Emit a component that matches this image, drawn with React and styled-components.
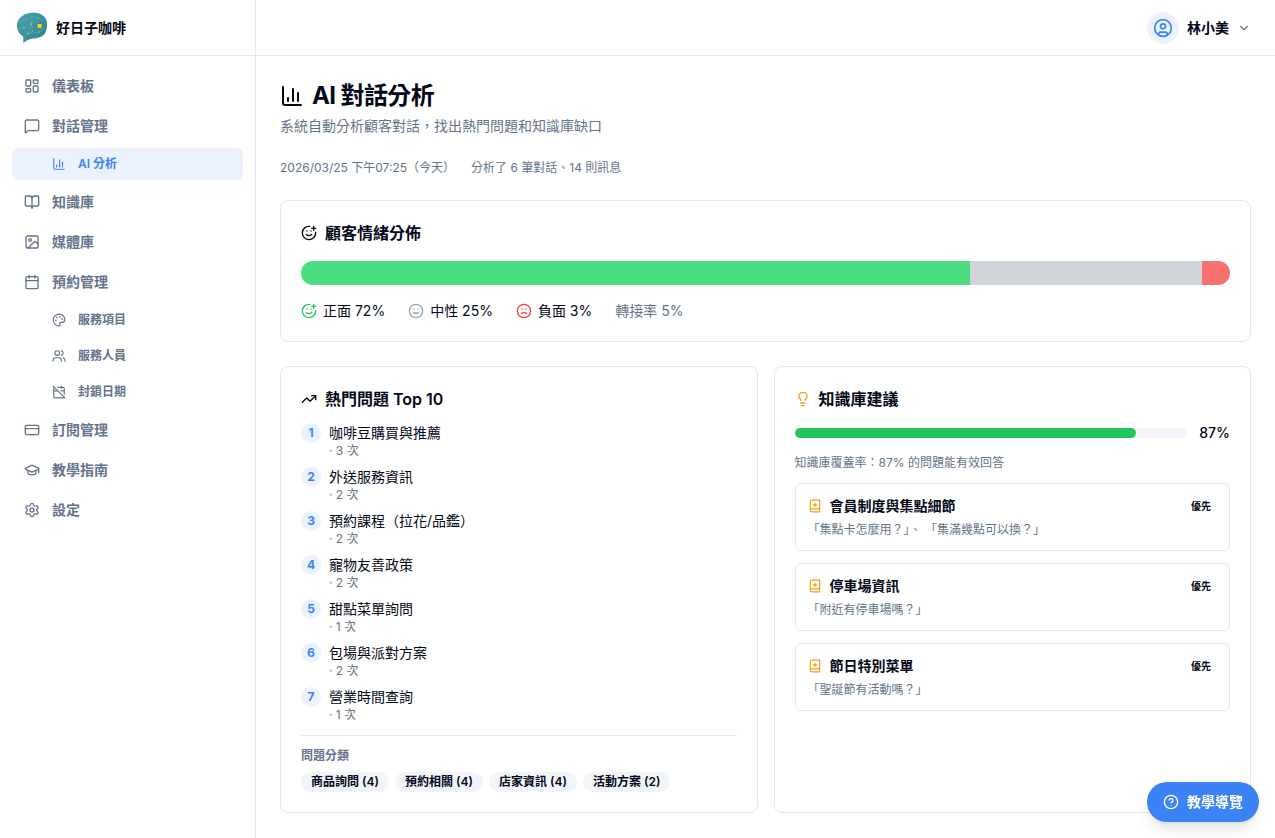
import React from 'react'
import styled, {createGlobalStyle} from 'styled-components'
import {
  BookOpen,
  BookPlus,
  Calendar,
  CalendarOff,
  ChartColumn,
  ChevronDown,
  CircleQuestionMark,
  CircleUser,
  CreditCard,
  Frown,
  GraduationCap,
  Image,
  LayoutDashboard,
  Lightbulb,
  Meh,
  MessageSquare,
  Palette,
  Settings,
  SmilePlus,
  TrendingUp,
  Users,
} from 'lucide-react'

const colors = {
  text: '#020817',
  muted: '#64748b',
  border: '#e2e8f0',
  soft: '#f1f5f9',
  primary: '#3b82f6',
  primarySoft: '#ebf2fe',
  green: '#22c55e',
  amber: '#f59e0b',
}

const NAV = [
  {label: '儀表板', icon: LayoutDashboard},
  {label: '對話管理', icon: MessageSquare},
  {label: 'AI 分析', icon: ChartColumn, sub: true, active: true},
  {label: '知識庫', icon: BookOpen},
  {label: '媒體庫', icon: Image},
  {label: '預約管理', icon: Calendar},
  {label: '服務項目', icon: Palette, sub: true},
  {label: '服務人員', icon: Users, sub: true},
  {label: '封鎖日期', icon: CalendarOff, sub: true},
  {label: '訂閱管理', icon: CreditCard},
  {label: '教學指南', icon: GraduationCap},
  {label: '設定', icon: Settings},
]

const SENTIMENT = [
  {label: '正面', value: 72, bar: '#4ade80', color: '#22c55e', icon: SmilePlus},
  {label: '中性', value: 25, bar: '#d1d5db', color: '#9ca3af', icon: Meh},
  {label: '負面', value: 3, bar: '#f87171', color: '#ef4444', icon: Frown},
]

const QUESTIONS = [
  {title: '咖啡豆購買與推薦', count: 3},
  {title: '外送服務資訊', count: 2},
  {title: '預約課程（拉花/品鑑）', count: 2},
  {title: '寵物友善政策', count: 2},
  {title: '甜點菜單詢問', count: 1},
  {title: '包場與派對方案', count: 2},
  {title: '營業時間查詢', count: 1},
]

const CATEGORIES = [
  {name: '商品詢問', count: 4},
  {name: '預約相關', count: 4},
  {name: '店家資訊', count: 4},
  {name: '活動方案', count: 2},
]

const SUGGESTIONS = [
  {title: '會員制度與集點細節', text: '「集點卡怎麼用？」、 「集滿幾點可以換？」'},
  {title: '停車場資訊', text: '「附近有停車場嗎？」'},
  {title: '節日特別菜單', text: '「聖誕節有活動嗎？」'},
]

const COVERAGE = 87

const Logo = () => (
  <svg width="32" height="32" viewBox="0 0 32 32" aria-hidden="true">
    <defs>
      <linearGradient id="bubble" x1="0" y1="0" x2="1" y2="1">
        <stop offset="0" stopColor="#45a5b0" />
        <stop offset="1" stopColor="#2f7f88" />
      </linearGradient>
    </defs>
    <path
      d="M16 .8C22 .6 27.500 2.500 30 7C31.800 11.500 31.400 18 28.500 22C26 25.200 21.500 26.200 16.500 26.600C12.500 27.300 10 29 7.400 31L7.200 24.600C3.500 22.600 1.200 19 1 14.200C.8 7.500 6 1.300 16 .8Z"
      fill="url(#bubble)"
    />
    <path
      d="M4 10L10 7L16 4L22 6L27 9M4 10L8 16L15 12L10 7M15 12L22 6M15 12L23 20L28 17M8 16L12 22L15 12L17 19L12 22L23 20M3 17L8 16M12 22L8 25M16 4L15 12M23 20L20 25"
      fill="none"
      stroke="#a9d2cf"
      strokeWidth=".4"
      opacity=".55"
    />
    <g fill="#c5e0d8" opacity=".8">
      <circle cx="10" cy="7" r=".6" />
      <circle cx="15" cy="12" r=".8" />
      <circle cx="8" cy="16" r=".6" />
      <circle cx="22" cy="6" r=".6" />
      <circle cx="12" cy="22" r=".6" />
      <circle cx="17" cy="19" r=".5" />
      <circle cx="23" cy="20" r=".6" />
    </g>
    <rect x="21.500" y="12" width="4" height="4" rx=".8" fill="#f5d90a" />
  </svg>
)

const App = () => (
  <>
    <GlobalStyle />
    <Page>
      <Sidebar>
        <Brand href="#">
          <Logo />
          好日子咖啡
        </Brand>
        <Nav>
          {NAV.map(({label, icon: Icon, sub, active}) => (
            <NavLink
              key={label}
              href="#"
              $sub={sub}
              $active={active}
              aria-current={active ? 'page' : undefined}
            >
              <Icon size={sub ? 14 : 16} />
              {label}
            </NavLink>
          ))}
        </Nav>
      </Sidebar>

      <Body>
        <TopBar>
          <UserButton type="button">
            <Avatar><CircleUser size={20} /></Avatar>
            林小美
            <Chevron size={14} />
          </UserButton>
        </TopBar>

        <Main>
          <header>
            <Title><ChartColumn size={24} />AI 對話分析</Title>
            <Subtitle>系統自動分析顧客對話，找出熱門問題和知識庫缺口</Subtitle>
          </header>

          <Meta>
            <span>2026/03/25 下午07:25（今天）</span>
            <span>分析了 6 筆對話、14 則訊息</span>
          </Meta>

          <Card>
            <CardTitle><SmilePlus size={16} />顧客情緒分佈</CardTitle>
            <StackedBar>
              {SENTIMENT.map(s => (
                <Segment key={s.label} $color={s.bar} style={{width: `${s.value}%`}} />
              ))}
            </StackedBar>
            <Legend>
              {SENTIMENT.map(({label, value, color, icon: Icon}) => (
                <LegendItem key={label}>
                  <Icon size={16} color={color} />
                  {label} {value}%
                </LegendItem>
              ))}
              <LegendItem $muted>轉接率 5%</LegendItem>
            </Legend>
          </Card>

          <Columns>
            <Card>
              <CardTitle><TrendingUp size={16} />熱門問題 Top 10</CardTitle>
              <Questions>
                {QUESTIONS.map((q, i) => (
                  <Question key={q.title}>
                    <Rank>{i + 1}</Rank>
                    <div>
                      <p>{q.title}</p>
                      <Small>· {q.count} 次</Small>
                    </div>
                  </Question>
                ))}
              </Questions>
              <Categories>
                <CategoriesTitle>問題分類</CategoriesTitle>
                <Chips>
                  {CATEGORIES.map(c => (
                    <Chip key={c.name}>{c.name} ({c.count})</Chip>
                  ))}
                </Chips>
              </Categories>
            </Card>

            <Card>
              <CardTitle $icon={colors.amber}><Lightbulb size={16} />知識庫建議</CardTitle>
              <Coverage>
                <Track>
                  <Fill style={{width: `${COVERAGE}%`}} />
                </Track>
                {COVERAGE}%
              </Coverage>
              <CoverageNote>知識庫覆蓋率：{COVERAGE}% 的問題能有效回答</CoverageNote>
              <Suggestions>
                {SUGGESTIONS.map(s => (
                  <Suggestion key={s.title}>
                    <SuggestionHead>
                      <BookPlus size={14} color={colors.amber} />
                      <SuggestionTitle>{s.title}</SuggestionTitle>
                      <Badge>優先</Badge>
                    </SuggestionHead>
                    <Small>{s.text}</Small>
                  </Suggestion>
                ))}
              </Suggestions>
            </Card>
          </Columns>
        </Main>
      </Body>

      <TourButton type="button">
        <CircleQuestionMark size={16} />
        教學導覽
      </TourButton>
    </Page>
  </>
)

const GlobalStyle = createGlobalStyle`
  *, *::before, *::after {
    box-sizing: border-box;
  }
  body {
    margin: 0;
    background: #fff;
    color: ${colors.text};
    font-family: Inter, "Noto Sans CJK TC", sans-serif;
    font-size: 14px;
    line-height: 20px;
  }
  h1, h2, h3, p, ol, ul {
    margin: 0;
    padding: 0;
  }
  ol, ul {
    list-style: none;
  }
  button {
    font: inherit;
    color: inherit;
    border: 0;
    background: none;
    cursor: pointer;
  }
  a {
    color: inherit;
    text-decoration: none;
  }
  svg {
    flex-shrink: 0;
  }
`
const Page = styled.div`
  display: flex;
  min-height: 100vh;
`
const Sidebar = styled.aside`
  width: 256px;
  flex-shrink: 0;
  border-right: 1px solid ${colors.border};
`
const Brand = styled.a`
  display: flex;
  align-items: center;
  gap: 8px;
  height: 56px;
  padding: 0 16px;
  border-bottom: 1px solid ${colors.border};
  font-weight: 600;
`
const Nav = styled.nav`
  display: flex;
  flex-direction: column;
  gap: 4px;
  padding: 12px;
`
const NavLink = styled.a`
  display: flex;
  align-items: center;
  gap: 12px;
  height: ${p => p.$sub ? 32 : 36}px;
  padding: 0 12px 0 ${p => p.$sub ? 40 : 12}px;
  border-radius: 6px;
  font-size: ${p => p.$sub ? 12 : 14}px;
  font-weight: 600;
  color: ${p => p.$active ? colors.primary : colors.muted};
  background: ${p => p.$active ? colors.primarySoft : 'transparent'};
`
const Body = styled.div`
  flex: 1;
  min-width: 0;
`
const TopBar = styled.header`
  display: flex;
  align-items: center;
  justify-content: flex-end;
  height: 56px;
  padding: 0 24px;
  border-bottom: 1px solid ${colors.border};
`
const UserButton = styled.button`
  display: flex;
  align-items: center;
  gap: 8px;
  padding: 0;
  font-weight: 600;
`
const Avatar = styled.span`
  display: flex;
  align-items: center;
  justify-content: center;
  width: 32px;
  height: 32px;
  border-radius: 50%;
  color: ${colors.primary};
  background: ${colors.primarySoft};
`
const Chevron = styled(ChevronDown)`
  color: ${colors.muted};
`
const Main = styled.main`
  display: flex;
  flex-direction: column;
  gap: 24px;
  padding: 24px;
`
const Title = styled.h1`
  display: flex;
  align-items: center;
  gap: 8px;
  font-size: 24px;
  line-height: 32px;
  font-weight: 700;
  letter-spacing: -0.025em;
`
const Subtitle = styled.p`
  margin-top: 4px;
  color: ${colors.muted};
`
const Meta = styled.div`
  display: flex;
  gap: 16px;
  font-size: 12px;
  line-height: 16px;
  color: ${colors.muted};
`
const Card = styled.section`
  padding: 20px;
  border: 1px solid ${colors.border};
  border-radius: 8px;
`
const CardTitle = styled.h2`
  display: flex;
  align-items: center;
  gap: 8px;
  font-size: 16px;
  line-height: 24px;
  font-weight: 600;
  svg {
    color: ${p => p.$icon || 'inherit'};
  }
`
const StackedBar = styled.div`
  display: flex;
  height: 24px;
  margin-top: 16px;
  border-radius: 12px;
  overflow: hidden;
`
const Segment = styled.div`
  background: ${p => p.$color};
`
const Legend = styled.div`
  display: flex;
  flex-wrap: wrap;
  gap: 23px;
  margin-top: 16px;
`
const LegendItem = styled.span`
  display: flex;
  align-items: center;
  gap: 6px;
  color: ${p => p.$muted ? colors.muted : colors.text};
`
const Columns = styled.div`
  display: grid;
  grid-template-columns: 1fr 1fr;
  gap: 16px;
`
const Questions = styled.ol`
  display: flex;
  flex-direction: column;
  gap: 8px;
  margin-top: 12px;
`
const Question = styled.li`
  display: flex;
  align-items: flex-start;
  gap: 8px;
`
const Rank = styled.span`
  width: 20px;
  height: 20px;
  border-radius: 50%;
  font-size: 12px;
  font-weight: 700;
  text-align: center;
  color: ${colors.primary};
  background: ${colors.primarySoft};
`
const Small = styled.p`
  font-size: 12px;
  line-height: 16px;
  color: ${colors.muted};
`
const Categories = styled.div`
  margin-top: 12px;
  padding-top: 12px;
  border-top: 1px solid ${colors.border};
`
const CategoriesTitle = styled.h3`
  font-size: 12px;
  line-height: 16px;
  font-weight: 600;
  color: ${colors.muted};
`
const Chips = styled.ul`
  display: flex;
  flex-wrap: wrap;
  gap: 6px;
  margin-top: 8px;
`
const Chip = styled.li`
  padding: 0 10px;
  border-radius: 10px;
  font-size: 12px;
  font-weight: 600;
  background: ${colors.soft};
`
const Coverage = styled.div`
  display: flex;
  align-items: center;
  gap: 12px;
  margin-top: 12px;
  font-weight: 500;
`
const Track = styled.div`
  flex: 1;
  height: 10px;
  border-radius: 5px;
  background: ${colors.soft};
`
const Fill = styled.div`
  height: 100%;
  border-radius: 5px;
  background: ${colors.green};
`
const CoverageNote = styled(Small)`
  margin: 12px 0;
`
const Suggestions = styled.ul`
  display: flex;
  flex-direction: column;
  gap: 12px;
`
const Suggestion = styled.li`
  padding: 12px;
  border: 1px solid ${colors.border};
  border-radius: 6px;
`
const SuggestionHead = styled.div`
  display: flex;
  align-items: center;
  gap: 8px;
  margin-bottom: 6px;
`
const SuggestionTitle = styled.h3`
  flex: 1;
  font-size: 14px;
  line-height: 20px;
  font-weight: 600;
`
const Badge = styled.span`
  padding: 0 6px;
  font-size: 10px;
  font-weight: 600;
`
const TourButton = styled.button`
  position: fixed;
  right: 16px;
  bottom: 16px;
  display: flex;
  align-items: center;
  gap: 8px;
  height: 40px;
  padding: 0 16px;
  border-radius: 20px;
  font-weight: 600;
  color: #fff;
  background: ${colors.primary};
  box-shadow: 0 10px 15px -3px rgba(0, 0, 0, 0.1), 0 4px 6px -4px rgba(0, 0, 0, 0.1);
`

export default App
